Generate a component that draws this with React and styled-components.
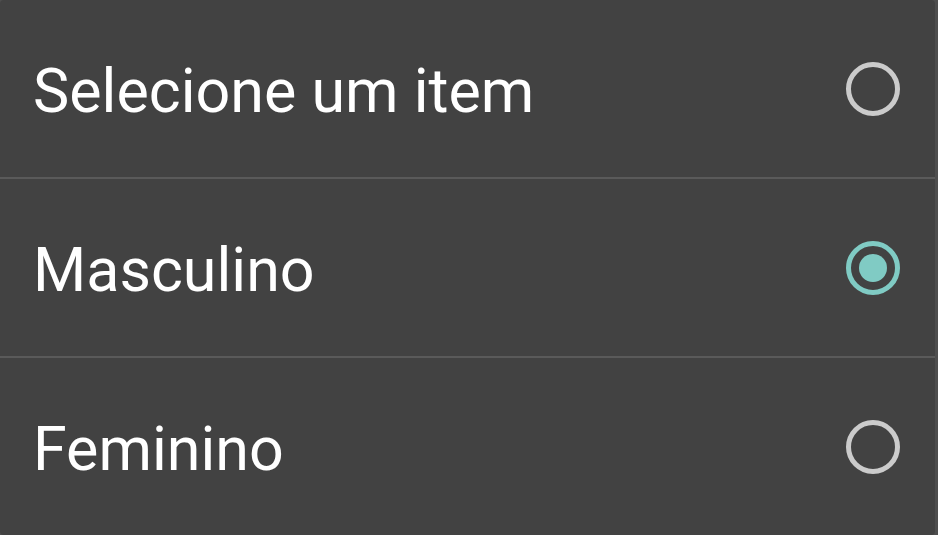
import styled, { createGlobalStyle } from 'styled-components';

const GlobalStyle = createGlobalStyle`
  html, body {
    margin: 0;
    padding: 0;
    background: #4e4e4e;
  }
  #root {
    width: 938px;
    height: 535px;
  }
`;

const options = [
  { label: 'Selecione um item', checked: false },
  { label: 'Masculino', checked: true },
  { label: 'Feminino', checked: false },
];

const App = () => (
  <>
    <GlobalStyle />
    <Dialog>
      {options.map((opt, i) => (
        <Row key={opt.label} $first={i === 0}>
          <Label>{opt.label}</Label>
          <Radio $checked={opt.checked} />
        </Row>
      ))}
    </Dialog>
  </>
);

export default App;

const Dialog = styled.div`
  width: 935px;
  height: 535px;
  background: #424242;
  border-radius: 4px;
  display: flex;
  flex-direction: column;
  overflow: hidden;
`;

const Row = styled.div`
  flex: 1;
  display: flex;
  align-items: center;
  justify-content: space-between;
  padding: 0 35px 0 33px;
  border-top: ${({ $first }) => ($first ? 'none' : '2px solid #5a5a5a')};
`;

const Label = styled.span`
  font-family: Roboto, 'Noto Sans', sans-serif;
  font-size: 61px;
  color: #ffffff;
  line-height: 1;
  padding-top: 5px;
`;

const Radio = styled.span`
  box-sizing: border-box;
  width: 54px;
  height: 54px;
  border-radius: 50%;
  border: 5px solid ${({ $checked }) => ($checked ? '#80cbc4' : '#cbcbcb')};
  display: flex;
  align-items: center;
  justify-content: center;

  &::after {
    content: '';
    width: 28px;
    height: 28px;
    border-radius: 50%;
    background: #80cbc4;
    display: ${({ $checked }) => ($checked ? 'block' : 'none')};
  }
`;
